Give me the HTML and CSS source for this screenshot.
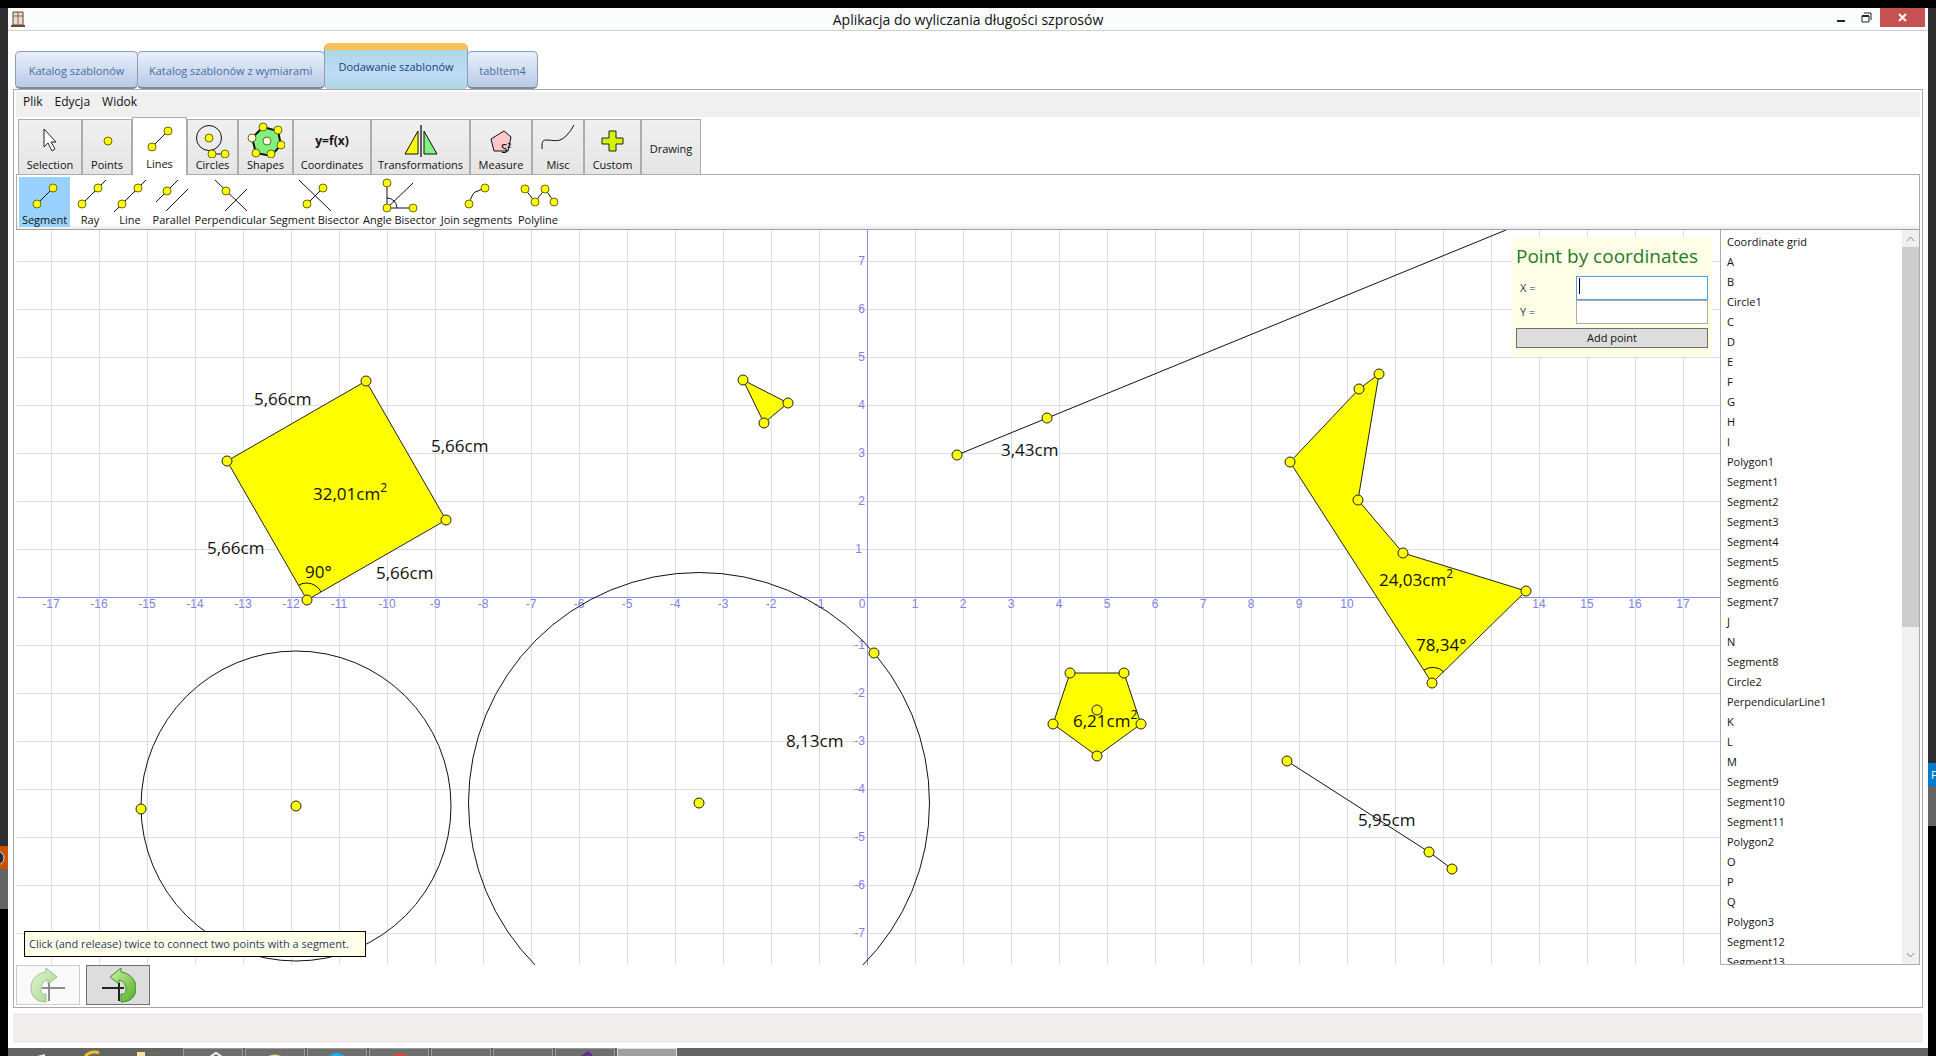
FILE: index.html
```html
<!DOCTYPE html>
<html lang="pl">
<head>
<meta charset="utf-8">
<title>Aplikacja do wyliczania długości szprosów</title>
<link rel="stylesheet" href="styles.css">
</head>
<body>
<div class="desktop">
  <div class="edge edge-left"><span class="edge-dark"></span><span class="edge-orange"><svg width="8" height="23"><circle cx="-3" cy="12" r="7" fill="#222b38" stroke="#e8d8c8"/></svg></span><span class="edge-gray"></span></div>
  <div class="screen">
    <div class="window">
      <header class="titlebar">
        <svg class="app-icon" width="14" height="16" viewBox="0 0 14 16"><path d="M2 1h10v13H2z" fill="#e4ded2" stroke="#5d4330"/><path d="M7 1v13M2 5h10" stroke="#8a6245"/><path d="M0 15h14" stroke="#6b4a30" stroke-width="2"/></svg>
        <h1 class="title">Aplikacja do wyliczania długości szprosów</h1>
        <div class="win-buttons">
          <button class="win-btn" aria-label="Minimize"><svg width="10" height="14"><path d="M1 10h8" stroke="#222" stroke-width="2"/></svg></button>
          <button class="win-btn" aria-label="Restore"><svg width="12" height="14"><path d="M1 5h7v6H1zM3 2h7v7" fill="none" stroke="#222"/><path d="M1 5h7" stroke="#222" stroke-width="2"/></svg></button>
          <button class="win-btn close" aria-label="Close"><svg width="10" height="10"><path d="M1 1l7 7M8 1l-7 7" stroke="#fff" stroke-width="2"/></svg></button>
        </div>
      </header>

      <nav class="tabs">
        <button class="tab tab-1">Katalog szablonów</button>
        <button class="tab tab-2">Katalog szablonów z wymiarami</button>
        <button class="tab tab-3 active">Dodawanie szablonów</button>
        <button class="tab tab-4">tabItem4</button>
      </nav>

      <main class="panel">
        <nav class="menu"><button>Plik</button><button>Edycja</button><button>Widok</button></nav>

        <div class="ribbon">
          <button class="cat"><svg width="36" height="36"><path d="M12 7v18l4-4 4 8 3-2-4-7h5z" fill="#fff" stroke="#222"/></svg>Selection</button>
          <button class="cat"><svg width="36" height="36"><circle class="dot" cx="19" cy="19" r="4"/></svg>Points</button>
          <button class="cat current"><svg width="36" height="36"><path class="ln" d="M10 26L26 10"/><circle class="dot" cx="10" cy="26" r="4"/><circle class="dot" cx="26" cy="10" r="4"/></svg>Lines</button>
          <button class="cat"><svg width="36" height="36"><circle class="ln" cx="14" cy="16" r="12.5"/><path class="ln" d="M17 32h12"/><circle class="dot" cx="14" cy="16" r="4"/><circle class="dot" cx="17" cy="32" r="4"/><circle class="dot" cx="30" cy="32" r="4"/></svg>Circles</button>
          <button class="cat"><svg width="38" height="36"><path d="M16 5l15 4 3 14-10 11-15-3-4-15z" fill="#80f080" stroke="#111" stroke-width="2"/><circle class="dot" cx="16" cy="5" r="4"/><circle class="dot" cx="31" cy="8" r="4"/><circle class="dot" cx="34" cy="23" r="4"/><circle class="dot" cx="24" cy="32" r="4"/><circle class="dot" cx="9" cy="31" r="4"/><circle class="dot pale" cx="5" cy="16" r="4"/><circle class="dot pale" cx="20" cy="19" r="4"/></svg>Shapes</button>
          <button class="cat"><span class="formula">y=f(x)</span>Coordinates</button>
          <button class="cat"><svg width="36" height="36"><path d="M2 32h13V9z" fill="#ff0" stroke="#111"/><path d="M21 9v23h13z" fill="#80f080" stroke="#111"/><path d="M18 3v32" stroke="#111" stroke-width="1.3"/></svg>Transformations</button>
          <button class="cat"><svg width="36" height="36"><path d="M8 17l13-8 7 6-3 14H11z" fill="#ffc8c8" stroke="#111"/><text x="18" y="31" font-size="12">S</text><text x="24" y="26" font-size="8">2</text></svg>Measure</button>
          <button class="cat"><svg width="36" height="36"><path class="ln" d="M2 27c0-6 0-9 4-9 8 0 13 3 20-4q5-5 8-11"/></svg>Misc</button>
          <button class="cat"><svg width="36" height="36"><path d="M14 9h7v7h7v6h-7v7h-7v-7H7v-6h7z" fill="#d4f400" stroke="#222"/></svg>Custom</button>
          <button class="cat plain">Drawing</button>
        </div>

        <div class="tools">
          <button class="tool selected"><svg width="40" height="36"><path class="ln" d="M12 27L28 11"/><circle class="dot" cx="12" cy="27" r="4"/><circle class="dot" cx="28" cy="11" r="4"/></svg>Segment</button>
          <button class="tool"><svg width="40" height="36"><path class="ln" d="M12 27L36 3"/><circle class="dot" cx="12" cy="27" r="4"/><circle class="dot" cx="28" cy="11" r="4"/></svg>Ray</button>
          <button class="tool"><svg width="40" height="36"><path class="ln" d="M4 35L36 3"/><circle class="dot" cx="12" cy="27" r="4"/><circle class="dot" cx="28" cy="11" r="4"/></svg>Line</button>
          <button class="tool"><svg width="40" height="36"><path class="ln" d="M4 25L26 3M14 34l22-22"/><circle class="dot" cx="15" cy="14" r="4"/></svg>Parallel</button>
          <button class="tool"><svg width="40" height="36"><path class="ln" d="M4 3l32 31M14 34l22-22"/><circle class="dot" cx="15" cy="14" r="4"/></svg>Perpendicular</button>
          <button class="tool"><svg width="40" height="36"><path class="ln" d="M12 27l16-16M4 3l32 31"/><circle class="dot" cx="12" cy="27" r="4"/><circle class="dot" cx="28" cy="11" r="4"/></svg>Segment Bisector</button>
          <button class="tool"><svg width="40" height="36"><path class="ln" d="M7 6v25h26M7 31L33 6M7 21a10 10 0 0 1 10 10"/><circle class="dot" cx="7" cy="6" r="4"/><circle class="dot" cx="7" cy="31" r="4"/><circle class="dot" cx="33" cy="31" r="4"/></svg>Angle Bisector</button>
          <button class="tool"><svg width="40" height="36"><path class="ln" d="M12 27q3-10 6-12 3-1 10-4"/><circle class="dot" cx="12" cy="27" r="4"/><circle class="dot" cx="28" cy="11" r="4"/></svg>Join segments</button>
          <button class="tool"><svg width="42" height="36"><path class="ln" d="M8 12l10 13 10-13 9 13"/><circle class="dot" cx="8" cy="12" r="4"/><circle class="dot" cx="18" cy="25" r="4"/><circle class="dot" cx="28" cy="12" r="4"/><circle class="dot" cx="37" cy="25" r="4"/></svg>Polyline</button>
        </div>

        <div class="work">
          <section class="board">
            <svg class="plot" width="100%" height="100%">
              <defs>
                <pattern id="grid" x="850" y="367" width="48" height="48" patternUnits="userSpaceOnUse"><path d="M.5 0v48M0 .5h48" stroke="#dedede" fill="none"/></pattern>
              </defs>
              <rect width="100%" height="100%" fill="url(#grid)"/>
              <g transform="translate(851 367)">
                <path class="axis" d="M-851 .5H900M-.5-367V900"/>
                <g class="ticks">
                  <text x="-817" y="11">-17</text><text x="-769" y="11">-16</text><text x="-721" y="11">-15</text><text x="-673" y="11">-14</text><text x="-625" y="11">-13</text><text x="-577" y="11">-12</text><text x="-529" y="11">-11</text><text x="-481" y="11">-10</text><text x="-433" y="11">-9</text><text x="-385" y="11">-8</text><text x="-337" y="11">-7</text><text x="-289" y="11">-6</text><text x="-241" y="11">-5</text><text x="-193" y="11">-4</text><text x="-145" y="11">-3</text><text x="-97" y="11">-2</text><text x="-49" y="11">-1</text><text x="-6" y="11">0</text>
                  <text x="47" y="11">1</text><text x="95" y="11">2</text><text x="143" y="11">3</text><text x="191" y="11">4</text><text x="239" y="11">5</text><text x="287" y="11">6</text><text x="335" y="11">7</text><text x="383" y="11">8</text><text x="431" y="11">9</text><text x="479" y="11">10</text><text x="671" y="11">14</text><text x="719" y="11">15</text><text x="767" y="11">16</text><text x="815" y="11">17</text>
                </g>
                <g class="ticks vertical">
                  <text x="-3" y="-332">7</text><text x="-3" y="-284">6</text><text x="-3" y="-236">5</text><text x="-3" y="-188">4</text><text x="-3" y="-140">3</text><text x="-3" y="-92">2</text><text x="-6" y="-44">1</text><text x="-3" y="52">-1</text><text x="-3" y="100">-2</text><text x="-3" y="148">-3</text><text x="-3" y="196">-4</text><text x="-3" y="244">-5</text><text x="-3" y="292">-6</text><text x="-3" y="340">-7</text>
                </g>
                <g class="fig">
                  <path d="M-502-216L-641-136-561 3-422-77z"/>
                  <path d="M-125-217L-80-194-104-174z"/>
                  <path d="M511-223L491-208 422-135 564 86 658-6 535-44 490-97z"/>
                  <path d="M202 76H256L273 127 229 159 185 127z"/>
                </g>
                <g class="ln">
                  <path d="M-569-12A16 16 0 0 1-547-5M556 73A16 16 0 0 1 576 75"/>
                  <path d="M89-142L638-367M419 164L561 255 584 272"/>
                  <circle cx="-572" cy="209" r="155"/><circle cx="-169" cy="206" r="230.5"/>
                </g>
                <g class="node">
                  <circle cx="-502" cy="-216" r="5"/><circle cx="-641" cy="-136" r="5"/><circle cx="-561" cy="3" r="5"/><circle cx="-422" cy="-77" r="5"/>
                  <circle cx="-125" cy="-217" r="5"/><circle cx="-80" cy="-194" r="5"/><circle cx="-104" cy="-174" r="5"/>
                  <circle cx="89" cy="-142" r="5"/><circle cx="179" cy="-179" r="5"/>
                  <circle cx="511" cy="-223" r="5"/><circle cx="491" cy="-208" r="5"/><circle cx="422" cy="-135" r="5"/><circle cx="564" cy="86" r="5"/><circle cx="658" cy="-6" r="5"/><circle cx="535" cy="-44" r="5"/><circle cx="490" cy="-97" r="5"/>
                  <circle cx="202" cy="76" r="5"/><circle cx="256" cy="76" r="5"/><circle cx="273" cy="127" r="5"/><circle cx="229" cy="159" r="5"/><circle cx="185" cy="127" r="5"/><circle cx="229" cy="113" r="5"/>
                  <circle cx="419" cy="164" r="5"/><circle cx="561" cy="255" r="5"/><circle cx="584" cy="272" r="5"/>
                  <circle cx="-572" cy="209" r="5"/><circle cx="-727" cy="212" r="5"/><circle cx="-169" cy="206" r="5"/><circle cx="6" cy="56" r="5"/>
                </g>
                <g class="measure">
                  <text x="-614" y="-192">5,66cm</text><text x="-437" y="-145">5,66cm</text><text x="-661" y="-43">5,66cm</text><text x="-492" y="-18">5,66cm</text>
                  <text x="-555" y="-97">32,01cm<tspan class="sup" dy="-8">2</tspan></text>
                  <text x="-563" y="-19">90°</text>
                  <text x="133" y="-141">3,43cm</text><text x="-82" y="150">8,13cm</text>
                  <text x="511" y="-11">24,03cm<tspan class="sup" dy="-8">2</tspan></text>
                  <text x="548" y="54">78,34°</text>
                  <text x="205" y="130">6,21cm<tspan class="sup" dy="-8">2</tspan></text>
                  <text x="490" y="229">5,95cm</text>
                </g>
              </g>
            </svg>
            <form class="coords">
              <h2>Point by coordinates</h2>
              <div class="row"><label for="px">X =</label><input id="px" class="focus" type="text"></div>
              <div class="row"><label for="py">Y =</label><input id="py" type="text"></div>
              <button type="button">Add point</button>
            </form>
            <p class="hint">Click (and release) twice to connect two points with a segment.</p>
          </section>
          <aside class="objects">
            <ul>
              <li>Coordinate grid</li><li>A</li><li>B</li><li>Circle1</li><li>C</li><li>D</li><li>E</li><li>F</li><li>G</li><li>H</li><li>I</li><li>Polygon1</li><li>Segment1</li><li>Segment2</li><li>Segment3</li><li>Segment4</li><li>Segment5</li><li>Segment6</li><li>Segment7</li><li>J</li><li>N</li><li>Segment8</li><li>Circle2</li><li>PerpendicularLine1</li><li>K</li><li>L</li><li>M</li><li>Segment9</li><li>Segment10</li><li>Segment11</li><li>Polygon2</li><li>O</li><li>P</li><li>Q</li><li>Polygon3</li><li>Segment12</li><li>Segment13</li>
            </ul>
            <div class="scroll">
              <svg width="17" height="17"><path d="M5 11l3.500-4 3.500 4" fill="none" stroke="#888"/></svg>
              <span class="thumb"></span>
              <svg width="17" height="17"><path d="M5 6l3.500 4L12 6" fill="none" stroke="#888"/></svg>
            </div>
          </aside>
        </div>

        <div class="history">
          <svg width="0" height="0" class="defs"><defs><linearGradient id="leaf" x2="1" y2="1"><stop offset="0" stop-color="#d2f5a4"/><stop offset="1" stop-color="#4fae26"/></linearGradient></defs></svg>
          <button disabled aria-label="Undo"><svg width="36" height="36"><path d="M16 1l11 9-9 7v-4c-5 1-7 5-7 10 0 3 1 4 5 4v8C6 35 1 29 1 21 1 12 8 6 16 5z" fill="url(#leaf)" stroke="#3f8a2c"/><path d="M19 16v18M12 21h23" stroke="#222" stroke-width="2"/></svg></button>
          <button aria-label="Redo"><svg width="36" height="36"><path d="M21 1L10 10l9 7v-4c5 1 7 5 7 10 0 3-1 4-5 4v8c10 0 15-6 15-14 0-9-7-15-15-16z" fill="url(#leaf)" stroke="#3f8a2c"/><path d="M19 16v18M2 21h22" stroke="#222" stroke-width="2"/></svg></button>
        </div>
      </main>
      <footer class="status"></footer>
    </div>
    <div class="taskbar">
      <span class="launch"><svg width="50" height="8"><path d="M29 8l8-2v2z" fill="#eee"/></svg></span>
      <span class="launch"><svg width="50" height="8"><path d="M27 8q7-6 14-3" fill="none" stroke="#f0c020" stroke-width="3"/></svg></span>
      <span class="launch wide"><svg width="60" height="8"><path d="M29 4h8v4h-8z" fill="#f4e6a0"/><path d="M42 5h10" stroke="#5da040" stroke-dasharray="2 1"/></svg></span>
      <span class="task"><svg width="20" height="8"><path d="M6 8l6-4 6 4" fill="#804090" stroke="#fff" stroke-width="2"/></svg></span>
      <span class="task"><svg width="20" height="8"><path d="M1 8q7-5 16 0z" fill="#f0d890"/></svg></span>
      <span class="task"><svg width="20" height="8"><path d="M0 8q8-8 18 0z" fill="#18b0ee"/></svg></span>
      <span class="task"><svg width="20" height="8"><path d="M2 8q8-8 16 0z" fill="#e04838"/></svg></span>
      <span class="task"></span><span class="task"></span>
      <span class="task"><svg width="20" height="8"><path d="M6 8l6-4 4 4" fill="none" stroke="#5c2d91" stroke-width="3"/></svg></span>
      <span class="task on"></span>
    </div>
  </div>
  <div class="edge edge-right"><span class="edge-dark"></span><span class="edge-blue">F</span><span class="edge-gray"></span></div>
</div>
</body>
</html>
```

FILE: styles.css
```css
* { box-sizing: border-box; }
body { margin: 0; background: #000; font: 11px/14px "Open Sans", "Noto Sans", sans-serif; color: #111; }
button, input { font: inherit; color: inherit; margin: 0; }
button { padding: 0; border: 0; background: none; }
h1, h2, p, ul { margin: 0; padding: 0; font-weight: normal; }
svg { display: block; flex: none; }

.desktop { display: flex; height: 100vh; padding-top: 8px; }
.screen { flex: 1; display: flex; flex-direction: column; min-width: 0; }
.edge { width: 8px; display: flex; flex-direction: column; overflow: hidden; }
.edge-dark { background: #2d2d30; }
.edge-left .edge-dark { height: 80%; }
.edge-orange { height: 23px; background: #ca5100; }
.edge-gray { height: 40px; background: #646464; }
.edge-right .edge-dark { height: 72%; }
.edge-blue { height: 23px; padding-left: 3px; background: #007acc; color: #fff; line-height: 23px; }

.window { flex: 1; display: flex; flex-direction: column; min-height: 0; background: #fff; }
.titlebar { display: grid; grid-template-columns: 140px 1fr 140px; height: 23px; border-bottom: 1px solid #ccd0d0; background: #fbfcfc; }
.app-icon { margin: 3px; }
.title { text-align: center; font-size: 14px; line-height: 24px; }
.win-buttons { display: flex; justify-content: flex-end; padding-right: 3px; }
.win-btn { width: 26px; height: 19px; display: flex; justify-content: center; align-items: center; }
.win-btn.close { width: 45px; background: #c75050; }

.tabs { display: flex; align-items: flex-end; height: 58px; padding: 0 7px; }
.tab { height: 38px; padding-top: 3px; border: 1px solid #8b9dba; border-bottom: 2px solid #80889a; border-radius: 5px; background: linear-gradient(#e8f0fb, #b9cae6); color: #4a6da0; font-size: 11px; margin-right: -1px; white-space: nowrap; }
.tab-1 { width: 123px; }
.tab-2 { width: 188px; padding-left: 11px; text-align: left; }
.tab-3 { width: 144px; }
.tab-4 { width: 71px; }
.tab.active { height: 46px; padding: 0 0 5px; border-top: 7px solid #f8c058; border-bottom: 0; background: linear-gradient(#add8e6, #bfdaf5 60%, #add8e6); color: #173f7c; z-index: 1; }

.panel { flex: 1; display: flex; flex-direction: column; min-height: 0; margin: 0 5px; padding: 2px; border: 1px solid #a8a8a8; }
.menu { display: flex; gap: 12px; height: 25px; padding: 0 7px 5px; background: #f0f0f0; font-size: 12px; }

.ribbon { display: grid; grid-template-columns: 64px 50px 55px 51px 55px 78px 99px 62px 52px 57px 60px; align-items: end; height: 57px; padding-left: 2px; }
.cat { display: flex; flex-direction: column; align-items: center; justify-content: flex-end; height: 55px; padding-bottom: 2px; border: 1px solid #acacac; border-bottom: 0; background: linear-gradient(#f0f0f0, #e5e5e5); white-space: nowrap; }
.cat.current { height: 58px; margin-bottom: -1px; padding-bottom: 4px; background: #fff; z-index: 1; }
.cat.plain { padding-bottom: 18px; }
.formula { height: 36px; font-size: 12px; font-weight: bold; line-height: 38px; }

.tools { display: grid; grid-template-columns: 51px 40px 40px 43px 75px 93px 77px 77px 46px; height: 56px; padding: 2px; border: 1px solid #acacac; border-bottom-color: #a0a0a0; background: linear-gradient(#fff 90%, #ececec); }
.tool { display: flex; flex-direction: column; align-items: center; height: 50px; white-space: nowrap; }
.tool.selected { background: #99d1ff; }

.ln { fill: none; stroke: #111; }
.dot { fill: #ff0; stroke: #6a6a10; }
.dot.pale { fill: #ffffe0; }

.work { flex: 1; display: grid; grid-template-columns: 1fr 200px; min-height: 0; }
.board { position: relative; min-width: 0; min-height: 0; padding-left: 1px; overflow: hidden; }
.plot { overflow: hidden; }
.axis { stroke: #8c8cec; fill: none; }
.ticks { fill: #8080e0; font: 12px "Liberation Sans", sans-serif; text-anchor: middle; }
.ticks.vertical { text-anchor: end; }
.fig { fill: #ff0; stroke: #222; }
.node { fill: #ff0; stroke: #222; }
.measure { font-size: 17px; fill: #111; }
.sup { font-size: 12px; }

.coords { position: absolute; top: 8px; right: 8px; width: 200px; padding: 6px 4px 8px; background: #ffffe8; color: #2c3c50; }
.coords h2 { margin-bottom: 8px; color: #1f7a1f; font-size: 19px; line-height: 24px; white-space: nowrap; }
.row { display: flex; justify-content: space-between; align-items: center; padding-left: 4px; }
.row input { width: 132px; height: 24px; border: 1px solid #abadb3; background: #fff; }
.row input.focus { border-color: #569de5; background: linear-gradient(#000, #000) 2px 1px / 1px 16px no-repeat #fff; }
.coords button { width: 192px; height: 20px; margin-top: 4px; border: 1px solid #707070; background: #ddd; color: #111; display: block; }

.hint { position: absolute; left: 8px; bottom: 8px; min-width: 342px; padding: 5px 4px; border: 1px solid #000; background: #ffffe8; color: #1f3a60; white-space: nowrap; }

.objects { display: flex; min-height: 0; border: 1px solid #acacac; border-top: 0; overflow: hidden; }
.objects ul { flex: 1; padding: 2px 6px; list-style: none; line-height: 20px; }
.scroll { width: 17px; display: flex; flex-direction: column; justify-content: space-between; background: #f0f0f0; }
.thumb { flex: 0 0 380px; margin-bottom: auto; background: #cdcdcd; }

.history { display: flex; gap: 6px; height: 40px; }
.defs { position: absolute; }
.history button { width: 64px; display: flex; justify-content: center; align-items: center; border: 1px solid #707070; background: #ddd; }
.history button:disabled { border-color: #ccc; background: #f9f9f9; }
.history button:disabled svg { opacity: 0.5; }
.status { height: 30px; margin: 5px; background: #f0edec; }

.taskbar { display: flex; height: 8px; background: #646464; overflow: hidden; }
.launch { width: 50px; }
.launch.wide { width: 75px; }
.task { width: 60px; margin-right: 2px; padding-left: 20px; border: 1px solid #999; border-bottom: 0; background: #6e6e6e; }
.task.on { background: #a0a0a0; border-color: #ddd; }
```
